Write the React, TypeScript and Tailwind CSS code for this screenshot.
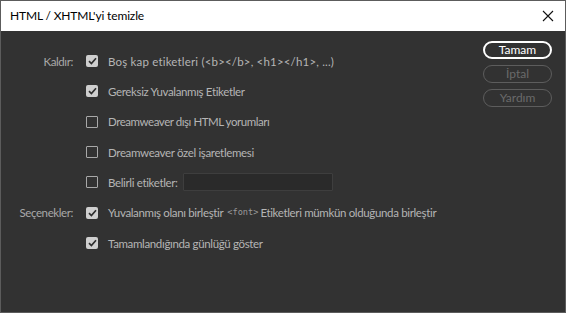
import React from 'react';

const font = { fontFamily: 'Lato, "Noto Sans", sans-serif' };

const Check: React.FC<{ checked?: boolean }> = ({ checked }) =>
  checked ? (
    <span className="w-[12px] h-[12px] rounded-[2px] bg-[#cfcfcf] flex items-center justify-center shrink-0">
      <svg width="9" height="8" viewBox="0 0 9 8">
        <path d="M1 4.2 L3.4 6.5 L8 1.3" fill="none" stroke="#2e2e2e" strokeWidth="1.7" />
      </svg>
    </span>
  ) : (
    <span className="w-[12px] h-[12px] rounded-[1px] border border-[#a8a8a8] shrink-0" />
  );

interface RowProps {
  label?: string;
  checked?: boolean;
  children: React.ReactNode;
}

const Row: React.FC<RowProps> = ({ label, checked, children }) => (
  <div className="flex items-center h-[30.33px]">
    <div className="w-[72px] shrink-0 flex justify-end whitespace-nowrap text-[#a9a9a9] text-[11.5px] tracking-[-0.4px]">
      {label}
    </div>
    <div className="ml-[13px] flex items-center">
      <Check checked={checked} />
      <div className="ml-[10px] flex items-center text-[11.5px] tracking-[-0.35px] text-[#b5b5b5] whitespace-nowrap">
        {children}
      </div>
    </div>
  </div>
);

export default function App() {
  return (
    <div className="w-[566px] h-[313px] border border-[#5c5c5c] bg-[#323232] flex flex-col" style={font}>
      <div className="h-[30px] bg-white flex items-center justify-between pl-[9px] pr-[11px] shrink-0">
        <span className="text-[12px] tracking-[-0.15px] text-black">HTML / XHTML'yi temizle</span>
        <svg width="12" height="12" viewBox="0 0 12 12">
          <path d="M1 1 L11 11 M11 1 L1 11" stroke="#111" strokeWidth="1.1" />
        </svg>
      </div>
      <div className="flex flex-1">
        <div className="flex-1 min-w-0 pt-[15px] flex flex-col">
          <Row label="Kaldır:" checked>
            <span className="tracking-[0.18px]">
              Boş kap etiketleri (&lt;b&gt;&lt;/b&gt;, &lt;h1&gt;&lt;/h1&gt;, ...)
            </span>
          </Row>
          <Row checked>Gereksiz Yuvalanmış Etiketler</Row>
          <Row>
            <span className="tracking-[-0.45px]">Dreamweaver dışı HTML yorumları</span>
          </Row>
          <Row>Dreamweaver özel işaretlemesi</Row>
          <Row>
            Belirli etiketler:
            <span className="ml-[5px] w-[150px] h-[18px] bg-[#2a2a2a] border border-[#3e3e3e] rounded-[1px]" />
          </Row>
          <Row label="Seçenekler:" checked>
            Yuvalanmış olanı birleştir
            <span
              className="ml-[4px] mr-[2px] text-[8.6px] tracking-normal text-[#9a9a9a]"
              style={{ fontFamily: '"DejaVu Sans Mono", monospace' }}
            >
              &lt;font&gt;
            </span>
            Etiketleri mümkün olduğunda birleştir
          </Row>
          <Row checked>Tamamlandığında günlüğü göster</Row>
        </div>
        <div className="w-[82px] pt-[10px] flex flex-col gap-[6px] shrink-0">
          <button className="w-[69px] h-[18px] rounded-full border-2 border-white text-white text-[12px] leading-none flex items-center justify-center">
            Tamam
          </button>
          <button className="w-[69px] h-[18px] rounded-full border border-[#5d5d5d] text-[#6a6a6a] text-[12px] leading-none flex items-center justify-center">
            İptal
          </button>
          <button className="w-[69px] h-[18px] rounded-full border border-[#5d5d5d] text-[#6a6a6a] text-[12px] leading-none flex items-center justify-center">
            Yardım
          </button>
        </div>
      </div>
    </div>
  );
}
